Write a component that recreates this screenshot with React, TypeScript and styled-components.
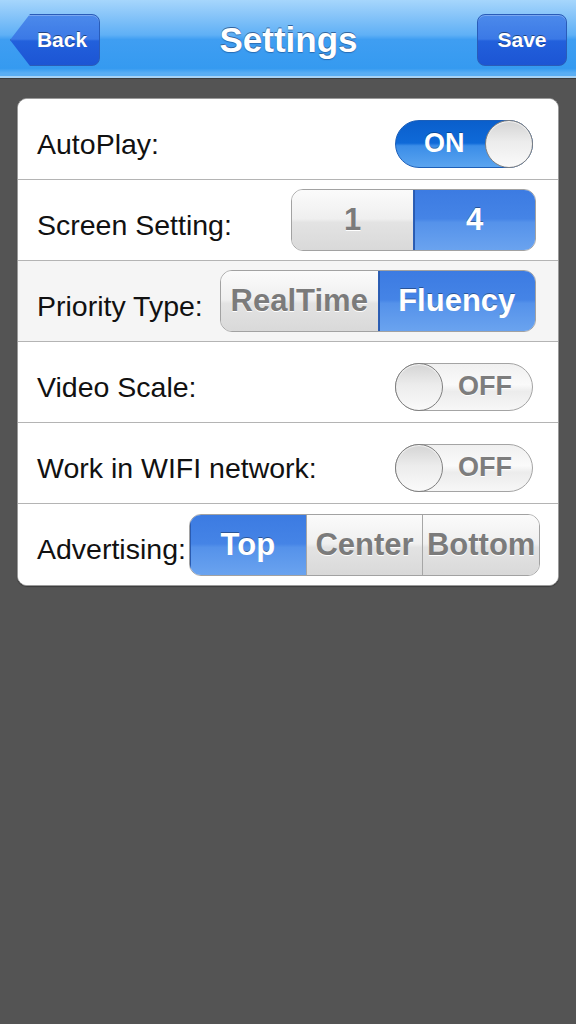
import React from 'react';
import styled, { createGlobalStyle, css } from 'styled-components';

const GlobalStyle = createGlobalStyle`
  html, body {
    margin: 0;
    padding: 0;
    background: #545454;
    font-family: "Liberation Sans", Arial, sans-serif;
  }
  * {
    box-sizing: border-box;
  }
`;

const Page = styled.div`
  min-height: 1024px;
  background: #545454;
`;

const NavBar = styled.div`
  height: 78px;
  display: flex;
  align-items: center;
  padding: 4px 9px 0 10px;
  background: linear-gradient(
    #a6d6fc 0%,
    #88c5f9 20%,
    #5fb0f6 46%,
    #3f9ef2 52%,
    #359af0 90%,
    #5aaef3 96%
  );
  border-bottom: 2px solid #a8d2f3;
  box-shadow: 0 1px 0 #3c3c3c;
`;

const navButton = css`
  width: 90px;
  height: 52px;
  border: 1px solid #2a5cb8;
  border-radius: 8px;
  background: linear-gradient(#4c8aeb 0%, #3b79e6 48%, #2260dc 52%, #1c55d4 100%);
  color: #fff;
  font-family: "Liberation Sans", Arial, sans-serif;
  font-weight: bold;
  font-size: 21px;
  text-shadow: 0 -1px 0 rgba(0, 0, 0, 0.45);
  display: flex;
  align-items: center;
  justify-content: center;
  box-shadow: inset 0 1px 0 rgba(255, 255, 255, 0.25);
`;

const BackButton = styled.div`
  ${navButton};
  padding-left: 14px;
  clip-path: polygon(0 50%, 20px 0, 100% 0, 100% 100%, 20px 100%);
`;

const SaveButton = styled.div`
  ${navButton};
`;

const Title = styled.div`
  flex: 1;
  text-align: center;
  color: #fff;
  font-weight: bold;
  font-size: 35px;
  text-shadow: 0 -1px 0 #34659e, 0 1px 1px rgba(20, 60, 120, 0.5);
`;

const Card = styled.div`
  margin: 20px 17px 0;
  background: #fff;
  border: 1px solid #9a9a9a;
  border-radius: 10px;
  overflow: hidden;
  box-shadow: 0 1px 1px rgba(0, 0, 0, 0.3);
`;

const Row = styled.div<{ $shaded?: boolean; $tight?: boolean }>`
  height: 81px;
  display: flex;
  align-items: center;
  justify-content: space-between;
  padding: 0 ${(p) => (p.$tight ? '18px' : '22px')} 0 19px;
  background: ${(p) => (p.$shaded ? '#f5f5f5' : '#fff')};
  border-bottom: 1px solid #b4b4b4;

  &:last-child {
    border-bottom: none;
  }
`;

const Label = styled.div`
  margin-top: 10px;
  font-size: 28.5px;
  color: #111;
  white-space: nowrap;
`;

const SwitchTrack = styled.div<{ $on: boolean }>`
  position: relative;
  width: 138px;
  height: 48px;
  margin: 9px 3px 0 0;
  border-radius: 24px;
  display: flex;
  align-items: center;
  font-weight: bold;
  font-size: 27px;
  ${(p) =>
    p.$on
      ? css`
          justify-content: flex-start;
          padding-left: 28px;
          color: #fff;
          border: 1px solid #1d5fb8;
          background: linear-gradient(#0a5fcc 0%, #0f6ad8 48%, #3b8de8 54%, #5aa4ef 100%);
          text-shadow: 0 -1px 0 rgba(0, 0, 0, 0.3);
        `
      : css`
          justify-content: flex-end;
          padding-right: 20px;
          color: #7d7d7d;
          border: 1px solid #a4a4a4;
          background: linear-gradient(#f0f0f0 0%, #fafafa 45%, #ececec 60%, #f7f7f7 100%);
          text-shadow: 0 1px 0 #fff;
        `}
`;

const Knob = styled.div<{ $on: boolean }>`
  position: absolute;
  top: -1px;
  ${(p) => (p.$on ? 'right: -1px;' : 'left: -1px;')}
  width: 48px;
  height: 48px;
  border-radius: 50%;
  border: 1px solid #808080;
  background: linear-gradient(#d4d4d4 0%, #ececec 45%, #fafafa 100%);
  box-shadow: inset 0 1px 1px rgba(255, 255, 255, 0.8);
`;

const Segmented = styled.div<{ $width: number; $shift?: number }>`
  width: ${(p) => p.$width}px;
  height: 62px;
  margin-right: ${(p) => p.$shift ?? 0}px;
  display: flex;
  border: 1px solid #a2a2a2;
  border-radius: 12px;
  overflow: hidden;
  flex-shrink: 0;
`;

const Segment = styled.div<{ $active: boolean }>`
  flex: 1;
  display: flex;
  align-items: center;
  justify-content: center;
  font-weight: bold;
  font-size: 31px;
  white-space: nowrap;
  border-left: 1px solid #a6a6a6;

  &:first-child {
    border-left: none;
  }

  ${(p) =>
    p.$active
      ? css`
          color: #fff;
          border-left-color: #2d5fb5;
          background: linear-gradient(#3c7be2 0%, #4584e6 48%, #5592ea 54%, #6aa3ef 100%);
          text-shadow: 0 -1px 0 rgba(0, 0, 0, 0.35);
          box-shadow: inset 1px 0 0 #2a5bb0;
        `
      : css`
          color: #7b7b7b;
          background: linear-gradient(#fbfbfb 0%, #efefef 48%, #e3e3e3 54%, #d9d9d9 100%);
          text-shadow: 0 1px 0 #fff;
        `}
`;

const Switch: React.FC<{ on: boolean }> = ({ on }) => (
  <SwitchTrack $on={on}>
    {on ? 'ON' : 'OFF'}
    <Knob $on={on} />
  </SwitchTrack>
);

interface SegmentsProps {
  items: string[];
  active: number;
  width: number;
  shift?: number;
}

const Segments: React.FC<SegmentsProps> = ({ items, active, width, shift }) => (
  <Segmented $width={width} $shift={shift}>
    {items.map((item, i) => (
      <Segment key={item} $active={i === active}>
        {item}
      </Segment>
    ))}
  </Segmented>
);

const App: React.FC = () => {
  return (
    <Page>
      <GlobalStyle />
      <NavBar>
        <BackButton>Back</BackButton>
        <Title>Settings</Title>
        <SaveButton>Save</SaveButton>
      </NavBar>
      <Card>
        <Row>
          <Label>AutoPlay:</Label>
          <Switch on />
        </Row>
        <Row>
          <Label>Screen Setting:</Label>
          <Segments items={['1', '4']} active={1} width={245} />
        </Row>
        <Row $shaded>
          <Label>Priority Type:</Label>
          <Segments items={['RealTime', 'Fluency']} active={1} width={316} />
        </Row>
        <Row>
          <Label>Video Scale:</Label>
          <Switch on={false} />
        </Row>
        <Row>
          <Label>Work in WIFI network:</Label>
          <Switch on={false} />
        </Row>
        <Row $tight>
          <Label>Advertising:</Label>
          <Segments items={['Top', 'Center', 'Bottom']} active={0} width={351} />
        </Row>
      </Card>
    </Page>
  );
};

export default App;
